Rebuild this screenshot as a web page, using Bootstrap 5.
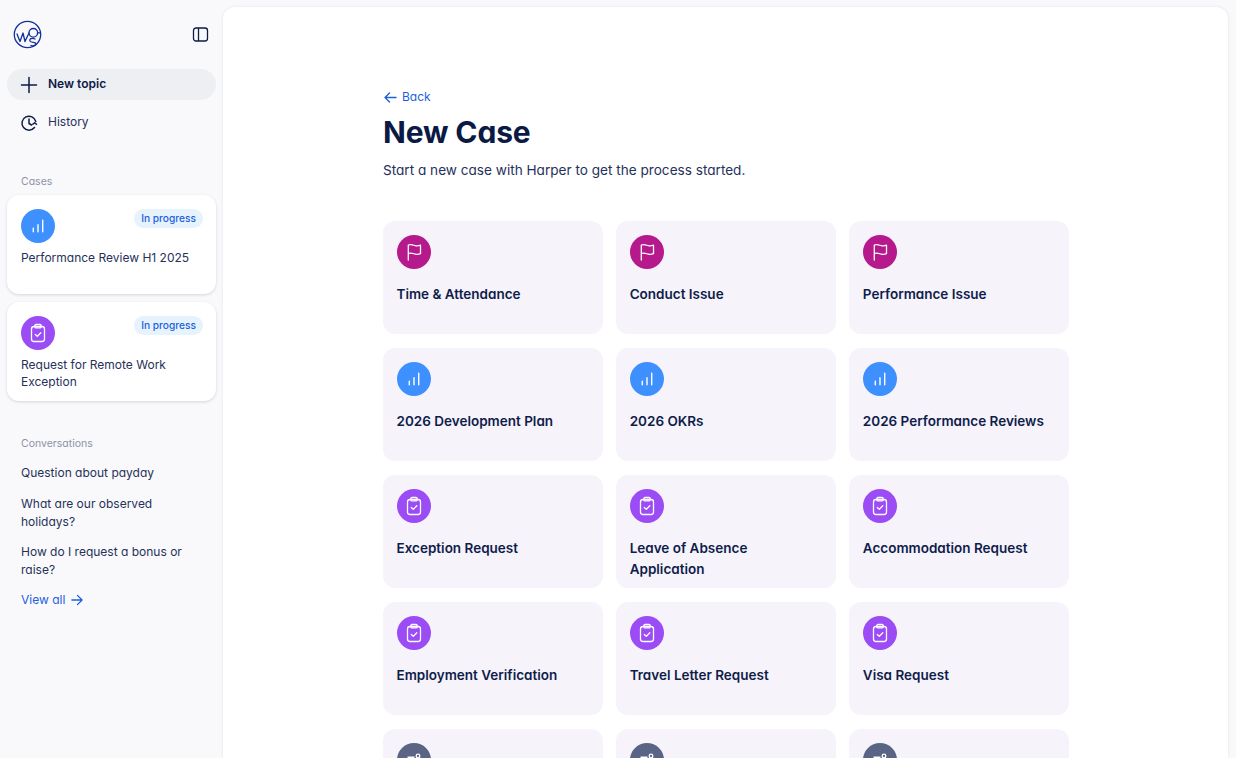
<!DOCTYPE html>
<html lang="en">
<head>
  <meta charset="UTF-8" />
  <meta name="viewport" content="width=device-width, initial-scale=1" />
  <title>New Case</title>
  <link href="https://cdn.jsdelivr.net/npm/bootstrap@5.3.3/dist/css/bootstrap.min.css" rel="stylesheet" />
  <style>
    html, body { height: 100%; overflow: hidden; }
    body {
      background: #f9f9fb; color: #0c1b47;
      font-family: Inter, "Liberation Sans", sans-serif;
      font-feature-settings: "cv11";
      font-size: 12px;
    }
    .app-shell { height: 758px; }
    .side-col { width: 223px; flex: none; padding: 0 7px; }
    .side-top { height: 69px; padding: 0 7px 0 6px; }
    .topic-btn {
      height: 31px; border-radius: 16px; background: #eeeff3; padding-left: 13px;
      font-weight: 600; font-size: 12px; color: #0c1b47;
    }
    .hist-row { height: 31px; margin-top: 7px; padding-left: 13px; font-size: 12px; color: #26315a; }
    .ico-text { margin-left: 2px; margin-top: -2px; }
    .side-label { font-size: 10.5px; color: #8d92a8; padding-left: 14px; line-height: 14px; }
    .case-tile {
      background: #fff; border-radius: 12px; padding: 14px 13px 0 14px;
      box-shadow: 0 1px 3px rgba(20, 28, 60, .16); height: 99px; font-size: 12px;
      line-height: 17.5px; color: #26315a;
    }
    .case-tile p { margin: 5.5px 0 0; }
    .status-pill {
      background: #e6f3fd; color: #1d5fe0; font-size: 10.2px; font-weight: 500;
      border-radius: 10px; height: 19px; line-height: 19px; padding: 0 7px;
    }
    .round-ico {
      width: 34px; height: 34px; border-radius: 50%; flex: none;
      display: flex; align-items: center; justify-content: center;
    }
    .ico-blue { background: #3f90ff; }
    .ico-violet { background: #9b4cf5; }
    .ico-magenta { background: #b5198c; }
    .ico-slate { background: #5a6485; }
    .conv-link { font-size: 12px; line-height: 18px; color: #26315a; padding-left: 14px; padding-right: 14px; }
    .blue-link { color: #1d5fe0; font-size: 12px; text-decoration: none; }
    .main-panel {
      flex: 1; margin: 7px 8px 0 0; background: #fff; border-radius: 12px 12px 0 0;
      box-shadow: 0 0 3px rgba(20, 28, 60, .1); padding-top: 81px; overflow: hidden;
    }
    .main-inner { width: 686px; margin-left: 160px; }
    .page-title { font-size: 30px; font-weight: 700; color: #0a1a44; line-height: 36px; margin: 5px 0 0; letter-spacing: -.15px; }
    .page-sub { font-size: 13.6px; line-height: 20px; color: #26315a; margin: 10px 0 41px; }
    .case-grid { display: grid; grid-template-columns: repeat(3, 1fr); gap: 14px 13.5px; }
    .type-tile {
      background: #f6f3fb; border-radius: 12px; height: 113px; padding: 14px 13.5px 0;
      font-size: 13.5px; font-weight: 600; line-height: 21px; color: #0f1d4a;
    }
    .type-tile p { margin: 15px 0 0; }
  </style>
</head>
<body>
  <svg width="0" height="0" class="position-absolute">
    <symbol id="i-flag" viewBox="0 0 20 20" fill="none" stroke="#fff" stroke-width="1.3" stroke-linecap="round" stroke-linejoin="round">
      <path d="M4.3 18V3c3-1.2 5 .2 7 .7 1.700.4 3.400.2 5.200-.5v8.500c-1.800.7-3.500.9-5.200.5-2-.5-4-1.900-7-.7" />
    </symbol>
    <symbol id="i-bars" viewBox="0 0 20 20" fill="none" stroke="#fff" stroke-width="1.400" stroke-linecap="round">
      <path d="M5.300 15.700v-3.500M10 15.700v-7M14.700 15.700V4.300" />
    </symbol>
    <symbol id="i-clip" viewBox="0 0 20 20" fill="none" stroke="#fff" stroke-width="1.300" stroke-linecap="round" stroke-linejoin="round">
      <rect x="3.500" y="3.500" width="13" height="15" rx="2.500" />
      <rect x="6.800" y="1.500" width="6.400" height="3.400" rx="1.200" />
      <path d="M7.300 11.500l2 1.900 3.500-3.700" />
    </symbol>
    <symbol id="i-horn" viewBox="0 0 20 20" fill="none" stroke="#fff" stroke-width="1.300">
      <path d="M3.500 6.500h7v8h-7z" fill="#fff" stroke="none" />
      <circle cx="14" cy="6" r="1.800" />
    </symbol>
  </svg>

  <div class="app-shell d-flex">
    <aside class="side-col">
      <div class="side-top d-flex justify-content-between align-items-center">
        <svg width="29" height="29" viewBox="0 0 29 29" fill="none" stroke="#12309a" stroke-width="1.300" stroke-linecap="round" stroke-linejoin="round">
          <circle cx="14.500" cy="14.500" r="13.200" />
          <path d="M4 14l3 7.500 3-8.500 2 8.500 4-8.500" />
          <circle cx="20.300" cy="12.800" r="4.300" />
          <path d="M24.600 12.800H27.500M22 19c-3-1.500-6 0-5 2 1 2 6 1 6 3 0 1.500-3 2.500-5 1.500" />
        </svg>
        <svg width="17" height="17" viewBox="0 0 17 17" fill="none" stroke="#0c1b47" stroke-width="1.300">
          <rect x="1.500" y="2" width="14" height="13" rx="2.500" />
          <path d="M6.500 2v13" />
        </svg>
      </div>
      <div class="topic-btn d-flex align-items-center gap-2">
        <svg width="18" height="18" viewBox="0 0 18 18" fill="none" stroke="#0c1b47" stroke-width="1.500" stroke-linecap="round"><path d="M9 1.500v15M1.500 9h15" /></svg>
        <span class="ico-text">New topic</span>
      </div>
      <div class="hist-row d-flex align-items-center gap-2">
        <svg width="18" height="18" viewBox="0 0 18 18" fill="none" stroke="#0c1b47" stroke-width="1.500" stroke-linecap="round" stroke-linejoin="round"><path d="M14.500 13.500A7 7 0 1 1 15.800 7.500" /><path d="M9 5v4.500l2.500 1.500" /><path d="M12.800 10.300l1.800-1.600 1.900 1.600" /></svg>
        <span class="ico-text">History</span>
      </div>

      <div class="side-label" style="margin-top:37px">Cases</div>
      <div class="case-tile" style="margin-top:6px">
        <div class="d-flex justify-content-between align-items-start">
          <span class="round-ico ico-blue"><svg width="20" height="20"><use href="#i-bars" /></svg></span>
          <span class="status-pill">In progress</span>
        </div>
        <p>Performance Review H1 2025</p>
      </div>
      <div class="case-tile" style="margin-top:8px">
        <div class="d-flex justify-content-between align-items-start">
          <span class="round-ico ico-violet"><svg width="20" height="20"><use href="#i-clip" /></svg></span>
          <span class="status-pill">In progress</span>
        </div>
        <p>Request for Remote Work Exception</p>
      </div>

      <div class="side-label" style="margin-top:36px">Conversations</div>
      <div class="conv-link" style="margin-top:13px">Question about payday</div>
      <div class="conv-link" style="margin-top:13px">What are our observed holidays?</div>
      <div class="conv-link" style="margin-top:12px">How do I request a bonus or raise?</div>
      <div class="conv-link" style="margin-top:12px">
        <a class="blue-link d-inline-flex align-items-center" style="gap:6px" href="#">View all
          <svg width="12" height="12" viewBox="0 0 13 13" fill="none" stroke="#1d5fe0" stroke-width="1.400" stroke-linecap="round" stroke-linejoin="round"><path d="M1 6.500h11M7 1.500l5 5-5 5" /></svg>
        </a>
      </div>
    </aside>

    <main class="main-panel">
      <div class="main-inner">
        <a class="blue-link d-inline-flex align-items-center" style="gap:5px" href="#">
          <svg width="14" height="13" viewBox="0 0 14 13" fill="none" stroke="#1d5fe0" stroke-width="1.400" stroke-linecap="round" stroke-linejoin="round"><path d="M13 6.500H2M6.500 2L2 6.500 6.500 11" /></svg>
          <span>Back</span>
        </a>
        <h1 class="page-title">New Case</h1>
        <p class="page-sub">Start a new case with Harper to get the process started.</p>
        <div class="case-grid" id="caseGrid"></div>
      </div>
    </main>
  </div>

  <script>
    const tipos = [
      ['Time & Attendance', 'magenta', 'flag'], ['Conduct Issue', 'magenta', 'flag'], ['Performance Issue', 'magenta', 'flag'],
      ['2026 Development Plan', 'blue', 'bars'], ['2026 OKRs', 'blue', 'bars'], ['2026 Performance Reviews', 'blue', 'bars'],
      ['Exception Request', 'violet', 'clip'], ['Leave of Absence Application', 'violet', 'clip'], ['Accommodation Request', 'violet', 'clip'],
      ['Employment Verification', 'violet', 'clip'], ['Travel Letter Request', 'violet', 'clip'], ['Visa Request', 'violet', 'clip'],
      ['', 'slate', 'horn'], ['', 'slate', 'horn'], ['', 'slate', 'horn']
    ];
    document.getElementById('caseGrid').innerHTML = tipos.map(t => `
      <div class="type-tile">
        <span class="round-ico ico-${t[1]}"><svg width="20" height="20"><use href="#i-${t[2]}" /></svg></span>
        <p>${t[0].replace('&', '&amp;')}</p>
      </div>`).join('');
  </script>
  <script src="https://cdn.jsdelivr.net/npm/bootstrap@5.3.3/dist/js/bootstrap.bundle.min.js"></script>
</body>
</html>
